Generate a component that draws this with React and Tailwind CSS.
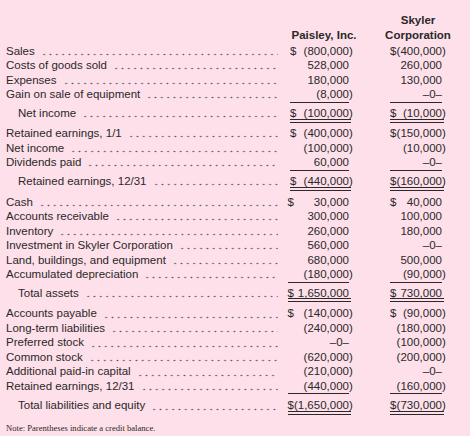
import React from "react";

const INK = "text-[#2b2829]";

function Num({ v }) {
  if (v.endsWith(")")) {
    return (
      <>
        {v.slice(0, -1)}
        <span className="mr-[-3.8px]">)</span>
      </>
    );
  }
  return <>{v}</>;
}

function Cell({ d, v, kind, w, wt }) {
  const base = "flex justify-between whitespace-nowrap shrink-0 leading-[14.5px]";
  let cls;
  if (kind === "total") {
    cls = `${base} ${wt} box-content h-[12.8px] pr-[2px] mr-[-2px] border-b-[4px] border-double border-[#2b2829]`;
  } else if (kind === "single") {
    cls = `${base} ${w} box-content h-[14.5px] border-b border-[#2b2829]`;
  } else {
    cls = `${base} ${w} h-[14.5px]`;
  }
  return (
    <div className={cls}>
      <span>{d ? "$" : ""}</span>
      <span>
        <Num v={v} />
      </span>
    </div>
  );
}

function Row({ label, indent, p, s, kind, mt, bottom }) {
  const pw = bottom ? "w-[61.5px]" : "w-[59px]";
  const pwt = bottom ? "w-[61.5px]" : "w-[59px]";
  return (
    <div className={`flex items-start ${mt || ""}`}>
      <div className="flex w-[272px] shrink-0 h-[14.5px] leading-[14.5px]">
        <span className={`whitespace-nowrap ${indent ? "pl-[12px]" : ""}`}>{label}</span>
        <span className="flex-1 ml-[6px] mt-[9.2px] h-[3px] bg-[radial-gradient(circle,#545a72_0.75px,transparent_1.05px)] [background-size:6.33px_3px] [background-repeat:repeat-x]" />
      </div>
      <div className="flex w-[71px] shrink-0 justify-end">
        <Cell d={p[0]} v={p[1]} kind={kind} w={pw} wt={pwt} />
      </div>
      <div className="flex w-[93px] shrink-0 justify-end">
        <Cell d={s[0]} v={s[1]} kind={kind} w="w-[52px]" wt="w-[52px]" />
      </div>
    </div>
  );
}

const Z = "\u20130\u2013";

export default function App() {
  return (
    <div
      className={`w-[470px] h-[436px] overflow-hidden bg-[#fde0ea] px-[6px] pt-[12.5px] text-[11.5px] ${INK}`}
      style={{ fontFamily: '"Liberation Sans", Arial, sans-serif' }}
    >
      <div className="font-bold leading-[15px]">
        <div className="flex">
          <div className="w-[274px] shrink-0" />
          <div className="w-[88px] shrink-0" />
          <div className="w-[10px] shrink-0" />
          <div className="w-[80px] shrink-0 text-center">Skyler</div>
        </div>
        <div className="flex">
          <div className="w-[274px] shrink-0" />
          <div className="w-[88px] shrink-0 text-center whitespace-nowrap">Paisley, Inc.</div>
          <div className="w-[10px] shrink-0" />
          <div className="w-[80px] shrink-0 text-center">Corporation</div>
        </div>
      </div>

      <Row mt="mt-[1px]" label="Sales" p={[true, "(800,000)"]} s={[true, "(400,000)"]} />
      <Row label="Costs of goods sold" p={[false, "528,000"]} s={[false, "260,000"]} />
      <Row label="Expenses" p={[false, "180,000"]} s={[false, "130,000"]} />
      <Row label="Gain on sale of equipment" p={[false, "(8,000)"]} s={[false, Z]} kind="single" />
      <Row mt="mt-[3.5px]" indent label="Net income" p={[true, "(100,000)"]} s={[true, "(10,000)"]} kind="total" />

      <Row mt="mt-[3.5px]" label="Retained earnings, 1/1" p={[true, "(400,000)"]} s={[true, "(150,000)"]} />
      <Row label="Net income" p={[false, "(100,000)"]} s={[false, "(10,000)"]} />
      <Row label="Dividends paid" p={[false, "60,000"]} s={[false, Z]} kind="single" />
      <Row mt="mt-[3.5px]" indent label="Retained earnings, 12/31" p={[true, "(440,000)"]} s={[true, "(160,000)"]} kind="total" />

      <Row bottom mt="mt-[3.5px]" label="Cash" p={[true, "30,000"]} s={[true, "40,000"]} />
      <Row bottom label="Accounts receivable" p={[false, "300,000"]} s={[false, "100,000"]} />
      <Row bottom label="Inventory" p={[false, "260,000"]} s={[false, "180,000"]} />
      <Row bottom label="Investment in Skyler Corporation" p={[false, "560,000"]} s={[false, Z]} />
      <Row bottom label="Land, buildings, and equipment" p={[false, "680,000"]} s={[false, "500,000"]} />
      <Row bottom label="Accumulated depreciation" p={[false, "(180,000)"]} s={[false, "(90,000)"]} kind="single" />
      <Row bottom mt="mt-[3px]" indent label="Total assets" p={[true, "1,650,000"]} s={[true, "730,000"]} kind="total" />

      <Row bottom mt="mt-[4px]" label="Accounts payable" p={[true, "(140,000)"]} s={[true, "(90,000)"]} />
      <Row bottom label="Long-term liabilities" p={[false, "(240,000)"]} s={[false, "(180,000)"]} />
      <Row bottom label="Preferred stock" p={[false, Z]} s={[false, "(100,000)"]} />
      <Row bottom label="Common stock" p={[false, "(620,000)"]} s={[false, "(200,000)"]} />
      <Row bottom label="Additional paid-in capital" p={[false, "(210,000)"]} s={[false, Z]} />
      <Row bottom label="Retained earnings, 12/31" p={[false, "(440,000)"]} s={[false, "(160,000)"]} kind="single" />
      <Row bottom mt="mt-[4px]" indent label="Total liabilities and equity" p={[true, "(1,650,000)"]} s={[true, "(730,000)"]} kind="total" />

      <div
        className="mt-[8px] text-[8.6px] leading-[11px] text-[#2b2829]"
        style={{ fontFamily: '"Liberation Serif", "Times New Roman", serif' }}
      >
        Note: Parentheses indicate a credit balance.
      </div>
    </div>
  );
}
